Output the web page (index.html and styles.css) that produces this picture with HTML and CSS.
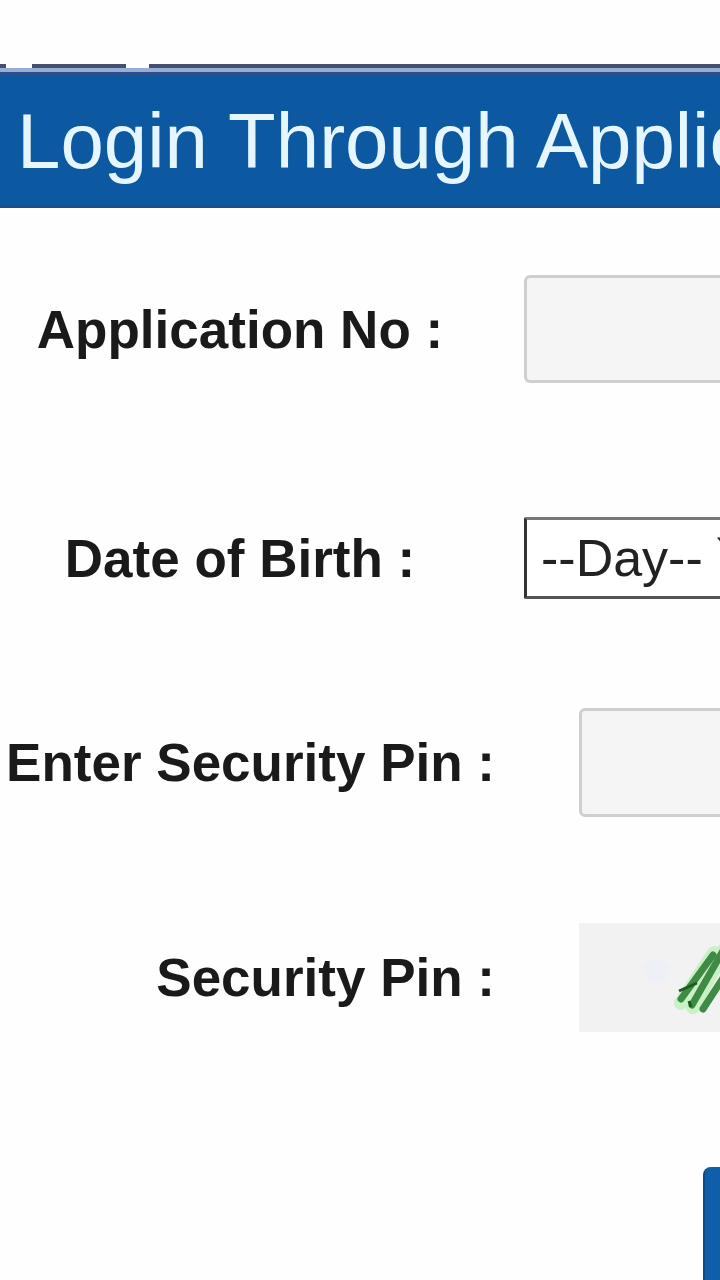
FILE: index.html
```html
<!DOCTYPE html>
<html lang="en">
<head>
    <meta charset="UTF-8">
    <meta name="viewport" content="width=device-width, initial-scale=1.0">
    <title>Login Through Application No.</title>
    <link rel="stylesheet" href="styles.css">
</head>
<body>
    <div class="page">
        <div class="rule"></div>
        <div class="title-bar">
            <h1>Login Through Application No. &amp; Date of Birth</h1>
        </div>

        <form class="login-form">
            <div class="row row-app">
                <label class="label-center" for="appNo">Application No :</label>
                <input type="text" id="appNo" class="field">
            </div>

            <div class="row row-dob">
                <label class="label-center" for="day">Date of Birth :</label>
                <select id="day" class="dob-select">
                    <option>--Day-- &#711;</option>
                </select>
            </div>

            <div class="row row-pin">
                <label class="label-right" for="pin">Enter Security Pin :</label>
                <input type="text" id="pin" class="field">
            </div>

            <div class="row row-captcha">
                <span class="label-right">Security Pin :</span>
                <div class="captcha">
                    <svg width="142" height="109" viewBox="0 0 142 109">
                        <ellipse cx="77" cy="48" rx="13" ry="12" fill="#edf1f7"/>
                        <g stroke="#c9f1c6" stroke-width="14" stroke-linecap="round" fill="none">
                            <line x1="102" y1="80" x2="135" y2="30"/>
                            <line x1="114" y1="84" x2="146" y2="26"/>
                        </g>
                        <g stroke="#3f8a44" stroke-width="7" stroke-linecap="round" fill="none">
                            <line x1="102" y1="76" x2="134" y2="32"/>
                            <line x1="113" y1="82" x2="145" y2="26"/>
                            <line x1="124" y1="86" x2="146" y2="52"/>
                        </g>
                        <g stroke="#1f5a26" stroke-width="3" fill="none">
                            <line x1="110" y1="78" x2="112" y2="84"/>
                            <line x1="100" y1="68" x2="118" y2="60"/>
                        </g>
                    </svg>
                </div>
            </div>

            <div class="actions">
                <button type="submit" class="btn-login">Login</button>
            </div>
        </form>
    </div>
</body>
</html>
```

FILE: styles.css
```css
html, body {
    margin: 0;
    padding: 0;
    overflow: hidden;
    background-color: #fefefe;
}
body {
    font-family: "Liberation Sans", Arial, sans-serif;
    color: #1a1a1a;
}
.page {
    width: 720px;
    padding-top: 64px;
}
.rule {
    height: 4px;
    background: linear-gradient(to right,
        #45506f 0 6px, #fefefe 6px 32px,
        #45506f 32px 126px, #fefefe 126px 149px,
        #45506f 149px);
}
.title-bar {
    border-top: 4px solid #96add6;
    background-color: #0c59a2;
    box-shadow: inset 0 3px 0 #2a4f8c, inset 0 -3px 0 #1b4f8a;
    height: 136px;
    overflow: hidden;
}
.title-bar h1 {
    margin: 0;
    padding: 4px 0 0 17px;
    font-size: 78px;
    font-weight: normal;
    line-height: 130px;
    color: #e6f6ff;
    white-space: nowrap;
}
.login-form {
    display: flex;
    flex-direction: column;
}
.row {
    display: grid;
    align-items: center;
}
.row-app, .row-dob {
    grid-template-columns: 480px 400px;
    column-gap: 44px;
}
.row-pin, .row-captcha {
    grid-template-columns: 495px 400px;
    column-gap: 84px;
}
.row-app { margin-top: 67px; }
.row-dob { margin-top: 134px; }
.row-pin { margin-top: 109px; }
.row-captcha { margin-top: 106px; }
.label-center, .label-right {
    font-size: 53px;
    font-weight: bold;
    white-space: nowrap;
}
.label-center {
    text-align: center;
}
.label-right {
    text-align: right;
}
.field {
    box-sizing: border-box;
    width: 400px;
    height: 108px;
    border: 3px solid #cfcfcf;
    border-radius: 6px;
    background-color: #f5f5f5;
    font-size: 40px;
}
.row-pin .field {
    height: 109px;
}
.dob-select {
    box-sizing: border-box;
    -webkit-appearance: none;
    appearance: none;
    width: 400px;
    height: 82px;
    padding: 0 0 0 14px;
    border: 3px solid #777;
    border-left-color: #333;
    border-bottom-color: #555;
    border-radius: 2px;
    background-color: #fff;
    font-family: "Liberation Sans", Arial, sans-serif;
    font-size: 52px;
    color: #222;
}
.captcha {
    width: 400px;
    height: 109px;
    background-color: #f2f2f2;
}
.captcha svg {
    display: block;
}
.actions {
    margin-top: 135px;
    padding-left: 703px;
}
.btn-login {
    width: 260px;
    height: 120px;
    padding-left: 90px;
    border: none;
    border-left: 2px solid #0a4a8c;
    border-radius: 8px 8px 0 0;
    background-color: #0f5ea8;
    color: #fff;
    font-size: 50px;
    white-space: nowrap;
}
```
